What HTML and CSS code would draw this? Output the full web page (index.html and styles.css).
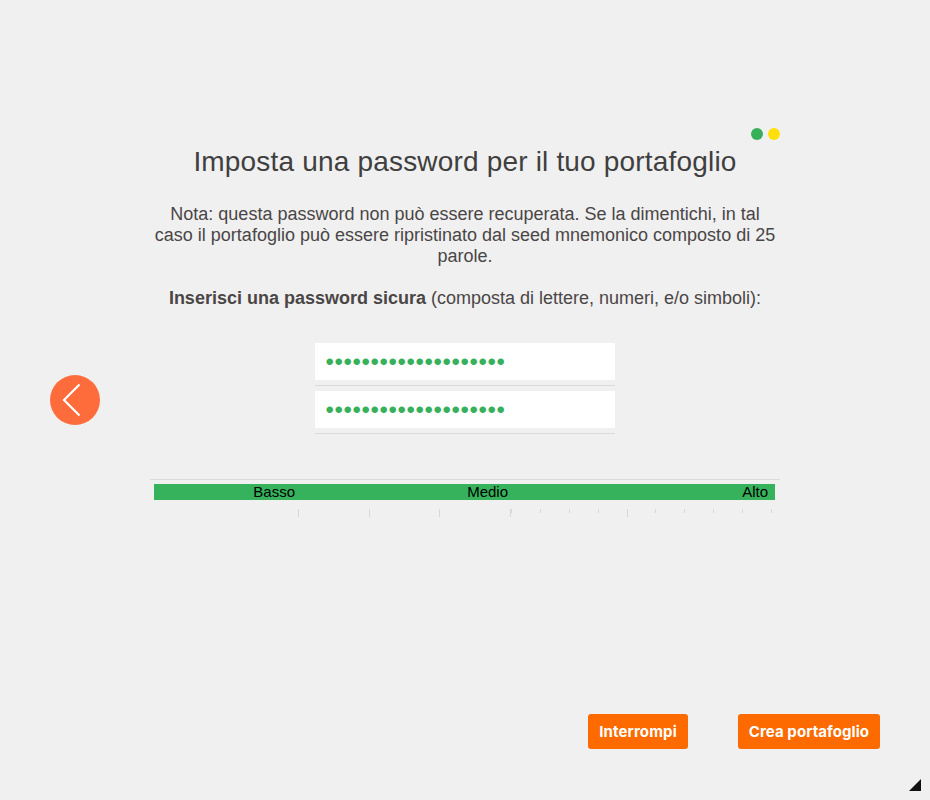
FILE: index.html
```
<!DOCTYPE html>
<html lang="it">
<head>
<meta charset="utf-8">
<title>Imposta password</title>
<link rel="stylesheet" href="styles.css">
</head>
<body>
<div class="wizard">
  <button class="back" aria-label="Indietro">
    <svg width="50" height="50" viewBox="0 0 50 50"><path d="M29.500 9.500 14 25l15.500 15.500" fill="none" stroke="#fff" stroke-width="2.200"/></svg>
  </button>
  <main class="content">
    <div class="steps"><i class="dot green"></i><i class="dot yellow"></i></div>
    <h1>Imposta una password per il tuo portafoglio</h1>
    <p class="note">Nota: questa password non può essere recuperata. Se la dimentichi, in tal caso il portafoglio può essere ripristinato dal seed mnemonico composto di 25 parole.</p>
    <p class="prompt"><b>Inserisci una password sicura</b> (composta di lettere, numeri, e/o simboli):</p>
    <div class="fields">
      <div class="field"><div class="input">••••••••••••••••••••</div></div>
      <div class="field"><div class="input">••••••••••••••••••••</div></div>
    </div>
    <div class="strength">
      <div class="bar"><span class="low">Basso</span><span class="mid">Medio</span><span class="high">Alto</span></div>
      <svg class="ticks" width="630" height="8" shape-rendering="crispEdges" fill="#d8d8d8">
        <path d="M148 0h1v8h-1zM219 0h1v8h-1zM289 0h1v8h-1zM360 0h2v4h-1v4h-1zM390 0h1v4h-1zM419 0h1v4h-1zM448 0h1v4h-1zM477 0h1v8h-1zM505 0h1v4h-1zM534 0h1v4h-1zM563 0h1v4h-1zM592 0h1v4h-1zM621 0h1v4h-1z"/>
      </svg>
    </div>
  </main>
  <footer class="actions">
    <button class="btn cancel">Interrompi</button>
    <button class="btn create">Crea portafoglio</button>
  </footer>
  <svg class="grip" width="12" height="12"><path d="M12 0v12H0z" fill="#111"/></svg>
</div>
</body>
</html>
```
FILE: styles.css
```
* { box-sizing: border-box; }
body {
  margin: 0;
  background: #f0f0f0;
  font-family: "Liberation Sans", Arial, sans-serif;
  color: #4a4646;
}
.wizard {
  position: relative;
  width: 930px;
  height: 800px;
  display: grid;
  grid-template-columns: 50px 630px;
  grid-template-rows: 714px 35px;
  column-gap: 50px;
  padding: 0 50px;
  overflow: hidden;
}
button { border: 0; padding: 0; margin: 0; }
.back {
  width: 50px;
  height: 50px;
  margin-top: 375px;
  border-radius: 50%;
  background: #ff6c3c;
}
.back svg { display: block; }
.content { padding-top: 128px; }
.steps {
  display: flex;
  justify-content: flex-end;
  gap: 5px;
}
.dot { width: 12px; height: 12px; border-radius: 50%; }
.green { background: #36b05b; }
.yellow { background: #ffe00a; }
h1 {
  margin: 6px 0 0;
  font-size: 28px;
  line-height: 32px;
  letter-spacing: 0.18px;
  font-weight: 400;
  text-align: center;
  color: #3f3f3f;
  white-space: nowrap;
}
.note, .prompt {
  margin: 26px 0 0;
  font-size: 18px;
  line-height: 21px;
  text-align: center;
}
.prompt { margin-top: 21px; white-space: nowrap; }
.fields {
  width: 300px;
  margin: 34px auto 0;
  display: flex;
  flex-direction: column;
  gap: 5px;
}
.field {
  height: 43px;
  border-bottom: 1px solid #dbdbdb;
}
.input {
  height: 37px;
  padding-left: 10.4px;
  background: #fff;
  color: #36b05b;
  font-size: 24px;
  line-height: 37px;
  letter-spacing: 0.6px;
}
.strength {
  margin-top: 45px;
  border-top: 1px solid #dbdbdb;
  padding-top: 4px;
}
.bar {
  width: 621px;
  height: 16px;
  margin-left: 4px;
  display: grid;
  grid-template-columns: 141px 213px 1fr;
  background: #36b25c;
  color: #000;
  font-size: 15px;
  line-height: 16px;
  text-align: right;
}
.high { padding-right: 7px; }
.ticks { display: block; margin-top: 9px; }
.actions {
  grid-column: 1 / -1;
  grid-row: 2;
  width: 830px;
  display: flex;
  justify-content: flex-end;
  gap: 50px;
}
.btn {
  height: 35px;
  border-radius: 3px;
  background: #fc6a00;
  color: #fff;
  font: 700 15px/35px Inter, sans-serif;
  text-align: center;
  white-space: nowrap;
}
.cancel { width: 100px; letter-spacing: 0.15px; }
.create { width: 142px; letter-spacing: 0.07px; }
.grip { position: absolute; right: 9px; bottom: 9px; }
```
